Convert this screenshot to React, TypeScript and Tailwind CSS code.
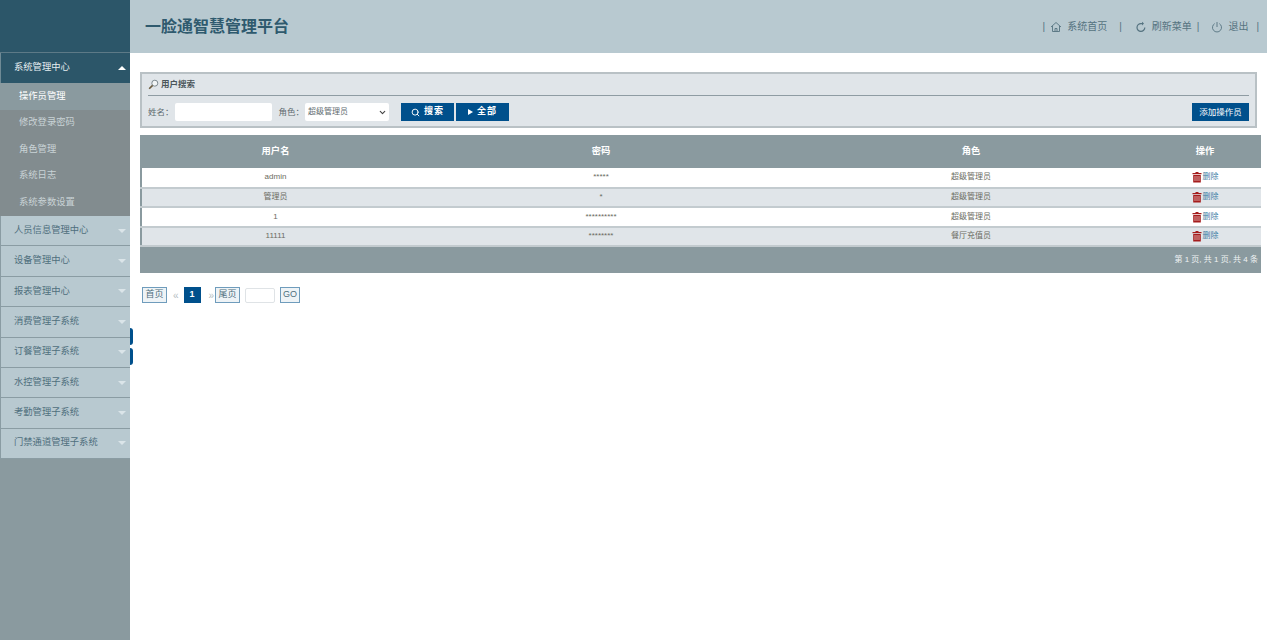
import { ChevronDown, Search } from 'lucide-react'

const font = { fontFamily: '"Liberation Sans", "Noto Sans CJK SC", sans-serif' }

const subItems = ['修改登录密码', '角色管理', '系统日志', '系统参数设置']
const menus = ['人员信息管理中心', '设备管理中心', '报表管理中心', '消费管理子系统', '订餐管理子系统', '水控管理子系统', '考勤管理子系统', '门禁通道管理子系统']
const rows = [
  ['admin', '*****', '超级管理员'],
  ['管理员', '*', '超级管理员'],
  ['1', '**********', '超级管理员'],
  ['11111', '********', '餐厅充值员'],
]

function Caret({ up }: { up?: boolean }) {
  return (
    <span
      className={
        up
          ? 'h-0 w-0 border-x-[4px] border-b-[4px] border-x-transparent border-b-white'
          : 'h-0 w-0 border-x-[4px] border-t-[4px] border-x-transparent border-t-[#dbe5e9]'
      }
    />
  )
}

function TrashIcon() {
  return (
    <svg width="10" height="12" viewBox="0 0 10 12" className="shrink-0">
      <path d="M3.5 1h3v1h3v1.2H.5V2h3z" fill="#a51c1c" />
      <path d="M1.2 4h7.6v7.5H1.2z" fill="#a51c1c" />
      <path d="M3 5v5M5 5v5M7 5v5" stroke="#e8c4c4" strokeWidth="0.8" />
    </svg>
  )
}

function Sidebar() {
  return (
    <aside className="relative w-[130px] shrink-0 bg-[#8a9a9f]">
      <div className="h-[53px] border-b border-[#5d7a87] bg-[#2c5669]" />
      <div className="flex h-[30px] items-center justify-between border-l border-[#6f8a95] bg-[#2c5669] pl-[13px] pr-[4px] text-[9.3px] text-[#e6eef1]">
        系统管理中心
        <Caret up />
      </div>
      <div className="flex h-[27px] items-center pl-[19px] text-[9.3px] text-white">操作员管理</div>
      <div className="bg-[#828c8f]">
        {subItems.map((t) => (
          <div key={t} className="flex h-[26.5px] items-center pl-[19px] text-[9.3px] text-[#c9d3d6]">
            {t}
          </div>
        ))}
      </div>
      {menus.map((t) => (
        <div
          key={t}
          className="flex h-[30.4px] items-center justify-between border-b border-l border-[#8a9ca3] bg-[#b8c9d0] pl-[13px] pr-[4px] text-[9.3px] text-[#4f6f7d]"
        >
          {t}
          <Caret />
        </div>
      ))}
      {/* collapse handles */}
      <div className="absolute left-[130px] top-[328px] h-[17px] w-[3px] rounded-r-sm bg-[#00508c]" />
      <div className="absolute left-[130px] top-[348px] h-[17px] w-[3px] rounded-r-sm bg-[#00508c]" />
    </aside>
  )
}

function Header() {
  return (
    <header className="flex h-[53px] items-center justify-between bg-[#b8c9d0] pl-[15px] pr-[8px] text-[#557380]">
      <h1 className="text-[16px] font-bold text-[#2f5a6e]">一脸通智慧管理平台</h1>
      <nav className="flex items-center text-[10px]">
        <span>|</span>
        <svg width="12" height="12" viewBox="0 0 12 12" fill="none" stroke="currentColor" strokeWidth="0.9" className="ml-[5px] mr-[5px]">
          <path d="M1 6 6 1.5 11 6M2.5 5v5.5h7V5M5 10.5V7.5h2v3" />
        </svg>
        <span>系统首页</span>
        <span className="ml-[12px]">|</span>
        <svg width="12" height="12" viewBox="0 0 12 12" fill="none" stroke="currentColor" strokeWidth="1.2" className="ml-[13px] mr-[5px]">
          <path d="M9.8 6.5A3.9 3.9 0 1 1 6 2.6h1.5" />
          <path d="M7 .8 9 2.6 7 4.4z" fill="currentColor" stroke="none" />
        </svg>
        <span>刷新菜单</span>
        <span className="ml-[5px]">|</span>
        <svg width="12" height="12" viewBox="0 0 12 12" fill="none" stroke="currentColor" strokeWidth="0.9" className="ml-[12px] mr-[5px]">
          <path d="M3.7 2.6a4.5 4.5 0 1 0 4.6 0M6 1v5" />
        </svg>
        <span>退出</span>
        <span className="ml-[8px]">|</span>
      </nav>
    </header>
  )
}

function SearchPanel() {
  return (
    <section className="mx-[10px] mt-[19px] h-[56px] border-2 border-[#b9c1c5] bg-[#e0e5e9] px-[6px] text-[8.5px] text-[#5f6b70]">
      <div className="flex h-[22px] items-center gap-[2px] border-b border-[#8f9ca3] font-bold text-[#4a555a]">
        <svg width="11" height="11" viewBox="0 0 11 11" fill="none">
          <circle cx="6.8" cy="4.2" r="3" stroke="#7d8a90" strokeWidth="1" fill="#f2f5f6" />
          <path d="M4.6 6.4 1.2 9.8" stroke="#6b5a3c" strokeWidth="1.6" />
        </svg>
        用户搜索
      </div>
      <div className="mt-[7px] flex items-center">
        <span>姓名：</span>
        <input className="ml-[1px] h-[18px] w-[97px] rounded-[2px] bg-white" />
        <span className="ml-[7px]">角色：</span>
        <div className="ml-[1px] flex h-[18px] w-[84px] items-center justify-between rounded-[2px] bg-white pl-[3px] pr-[2px] text-[8px]">
          超级管理员
          <ChevronDown size={9} strokeWidth={3} className="text-[#444]" />
        </div>
        <button className="ml-[12px] flex h-[18px] w-[53px] items-center justify-center gap-[4px] bg-[#00508c] text-[9px] font-bold tracking-[1px] text-white">
          <Search size={9} strokeWidth={2.5} />
          搜索
        </button>
        <button className="ml-[2px] flex h-[18px] w-[53px] items-center justify-center gap-[4px] bg-[#00508c] text-[9px] font-bold tracking-[1px] text-white">
          <span className="h-0 w-0 border-y-[3px] border-l-[5px] border-y-transparent border-l-white" />
          全部
        </button>
        <button className="ml-auto h-[18px] w-[57px] bg-[#00508c] text-[8.5px] text-white">添加操作员</button>
      </div>
    </section>
  )
}

function UserTable() {
  return (
    <table className="ml-[10px] mr-[6px] mt-[7px] w-[1120px] table-fixed border-collapse border-l-2 border-[#8a9a9f] text-center text-[8px] text-[#6b6b62]">
      <colgroup>
        <col className="w-[268px]" />
        <col className="w-[384px]" />
        <col className="w-[356px]" />
        <col className="w-[112px]" />
      </colgroup>
      <thead>
        <tr className="h-[33px] bg-[#8a9a9f] text-[9.3px] text-white">
          <th>用户名</th>
          <th>密码</th>
          <th>角色</th>
          <th>操作</th>
        </tr>
      </thead>
      <tbody>
        {rows.map((r, i) => (
          <tr key={r[0]} className={`h-[19.5px] border-b-2 border-[#c3cbcf] ${i % 2 ? 'bg-[#e0e5e9]' : 'bg-white'}`}>
            <td>{r[0]}</td>
            <td>{r[1]}</td>
            <td>{r[2]}</td>
            <td>
              <span className="flex items-center justify-center gap-[1px] text-[#3f7ea6]">
                <TrashIcon />
                删除
              </span>
            </td>
          </tr>
        ))}
      </tbody>
      <tfoot>
        <tr className="h-[27px] bg-[#8a9a9f]">
          <td colSpan={4} className="pr-[3px] text-right text-[8px] text-[#eef2f3]">
            第 1 页, 共 1 页, 共 4 条
          </td>
        </tr>
      </tfoot>
    </table>
  )
}

function Pager() {
  const btn = 'flex h-[16px] items-center justify-center border border-[#6f9cbc] bg-[#eef3f6] text-[9px] text-[#4f6f7d]'
  return (
    <div className="ml-[12px] mt-[14px] flex items-center">
      <span className={`${btn} w-[25px]`}>首页</span>
      <span className="ml-[6px] text-[10px] text-[#b5bdc2]">«</span>
      <span className="ml-[5px] flex h-[16px] w-[17px] items-center justify-center bg-[#00508c] text-[9px] font-bold text-white">1</span>
      <span className="ml-[8px] text-[10px] text-[#b5bdc2]">»</span>
      <span className={`${btn} ml-[1px] w-[25px]`}>尾页</span>
      <span className="ml-[5px] h-[15px] w-[30px] rounded-[2px] border border-[#dfe3e6] bg-white" />
      <span className={`${btn} ml-[5px] w-[20px]`}>GO</span>
    </div>
  )
}

export default function App() {
  return (
    <div className="flex min-h-[640px] w-full bg-white" style={font}>
      <Sidebar />
      <main className="min-w-0 flex-1">
        <Header />
        <SearchPanel />
        <UserTable />
        <Pager />
      </main>
    </div>
  )
}
